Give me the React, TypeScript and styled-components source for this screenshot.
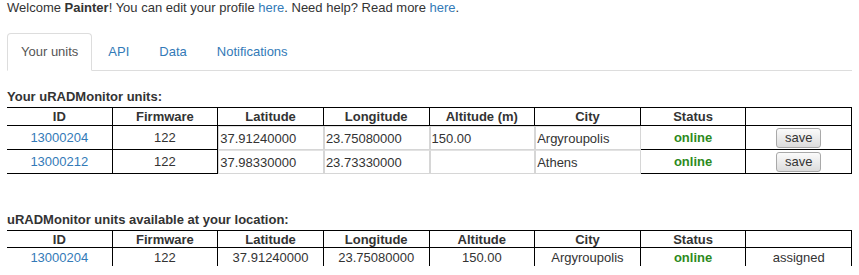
import React from 'react'
import styled, { createGlobalStyle } from 'styled-components'

interface Unit {
  id: string
  firmware: string
  lat: string
  lng: string
  alt: string
  city: string
  status: string
}

const myUnits: Unit[] = [
  { id: '13000204', firmware: '122', lat: '37.91240000', lng: '23.75080000', alt: '150.00', city: 'Argyroupolis', status: 'online' },
  { id: '13000212', firmware: '122', lat: '37.98330000', lng: '23.73330000', alt: '', city: 'Athens', status: 'online' },
]

const nearbyUnits: Unit[] = [
  { id: '13000204', firmware: '122', lat: '37.91240000', lng: '23.75080000', alt: '150.00', city: 'Argyroupolis', status: 'online' },
]

const tabs = ['Your units', 'API', 'Data', 'Notifications']

const App: React.FC = () => {
  return (
    <Page>
      <GlobalStyle />
      <Welcome>
        Welcome <b>Painter</b>! You can edit your profile <Link href="#">here</Link>. Need help? Read
        more <Link href="#">here</Link>.
      </Welcome>

      <Tabs>
        {tabs.map((t, i) => (
          <Tab key={t} $active={i === 0}>
            {t}
          </Tab>
        ))}
      </Tabs>

      <SectionTitle $gap={18}>Your uRADMonitor units:</SectionTitle>
      <Table>
        <colgroup>
          {Array.from({ length: 8 }).map((_, i) => (
            <col key={i} />
          ))}
        </colgroup>
        <thead>
          <tr>
            <HeadCell>ID</HeadCell>
            <HeadCell>Firmware</HeadCell>
            <HeadCell>Latitude</HeadCell>
            <HeadCell>Longitude</HeadCell>
            <HeadCell>Altitude (m)</HeadCell>
            <HeadCell>City</HeadCell>
            <HeadCell>Status</HeadCell>
            <HeadCell />
          </tr>
        </thead>
        <tbody>
          {myUnits.map((u) => (
            <tr key={u.id}>
              <Cell>
                <Link href="#">{u.id}</Link>
              </Cell>
              <Cell>{u.firmware}</Cell>
              <InputCell>
                <Field defaultValue={u.lat} />
              </InputCell>
              <InputCell>
                <Field defaultValue={u.lng} />
              </InputCell>
              <InputCell>
                <Field defaultValue={u.alt} />
              </InputCell>
              <InputCell>
                <Field defaultValue={u.city} />
              </InputCell>
              <Cell>
                <Status>{u.status}</Status>
              </Cell>
              <Cell>
                <SaveButton type="button">save</SaveButton>
              </Cell>
            </tr>
          ))}
        </tbody>
      </Table>

      <SectionTitle $gap={38}>uRADMonitor units available at your location:</SectionTitle>
      <Table>
        <colgroup>
          {Array.from({ length: 8 }).map((_, i) => (
            <col key={i} />
          ))}
        </colgroup>
        <thead>
          <tr>
            <HeadCell $dense>ID</HeadCell>
            <HeadCell $dense>Firmware</HeadCell>
            <HeadCell $dense>Latitude</HeadCell>
            <HeadCell $dense>Longitude</HeadCell>
            <HeadCell $dense>Altitude</HeadCell>
            <HeadCell $dense>City</HeadCell>
            <HeadCell $dense>Status</HeadCell>
            <HeadCell $dense />
          </tr>
        </thead>
        <tbody>
          {nearbyUnits.map((u) => (
            <tr key={u.id}>
              <Cell $dense>
                <Link href="#">{u.id}</Link>
              </Cell>
              <Cell $dense>{u.firmware}</Cell>
              <Cell $dense>{u.lat}</Cell>
              <Cell $dense>{u.lng}</Cell>
              <Cell $dense>{u.alt}</Cell>
              <Cell $dense>{u.city}</Cell>
              <Cell $dense>
                <Status>{u.status}</Status>
              </Cell>
              <Cell $dense>assigned</Cell>
            </tr>
          ))}
        </tbody>
      </Table>
    </Page>
  )
}

const GlobalStyle = createGlobalStyle`
  body {
    margin: 0;
    background: #fff;
    color: #333;
    font-family: "Liberation Sans", Arial, Helvetica, sans-serif;
  }
`

const Page = styled.div`
  padding: 0 7px;
`

const Welcome = styled.p`
  margin: 0;
  font-size: 13px;
  line-height: 16px;
  color: #333;
`

const Link = styled.a`
  color: #337ab7;
  text-decoration: none;
`

const Tabs = styled.ul`
  display: flex;
  list-style: none;
  margin: 17px 0 0;
  padding: 0;
  border-bottom: 1px solid #ddd;
`

const Tab = styled.li<{ $active?: boolean }>`
  margin: 0 2px -1px 0;
  padding: 10px 13px;
  font-size: 13px;
  line-height: 16px;
  border: 1px solid ${(p) => (p.$active ? '#ddd' : 'transparent')};
  border-bottom-color: ${(p) => (p.$active ? '#fff' : 'transparent')};
  border-radius: 4px 4px 0 0;
  background: ${(p) => (p.$active ? '#fff' : 'transparent')};
  color: ${(p) => (p.$active ? '#555' : '#337ab7')};
`

const SectionTitle = styled.h4<{ $gap: number }>`
  margin: ${(p) => p.$gap}px 0 2px;
  font-size: 13px;
  line-height: 16px;
  font-weight: bold;
  color: #333;
`

const Table = styled.table`
  width: 100%;
  table-layout: fixed;
  border-collapse: separate;
  border-spacing: 0;
  font-size: 13px;
  color: #333;
`

const HeadCell = styled.th<{ $dense?: boolean }>`
  height: ${(p) => (p.$dense ? 16 : 17)}px;
  padding: 0;
  border-top: 1px solid #000;
  border-right: 1px solid #000;
  border-bottom: 1px solid #000;
  font-weight: bold;
  text-align: center;
  vertical-align: middle;
  line-height: 15px;
`

const Cell = styled.td<{ $dense?: boolean }>`
  height: ${(p) => (p.$dense ? 18 : 23)}px;
  padding: 0;
  border-right: 1px solid #000;
  border-bottom: ${(p) => (p.$dense ? 'none' : '1px solid #000')};
  text-align: center;
  vertical-align: middle;
  line-height: 15px;
`

const InputCell = styled.td`
  padding: 0;
  vertical-align: top;
`

const Field = styled.input`
  display: block;
  width: 100%;
  height: 24px;
  box-sizing: border-box;
  margin: 0;
  padding: 0 1px;
  border: 1px solid #d6d6d6;
  border-top-color: #e2e2e2;
  font-family: "Liberation Sans", Arial, sans-serif;
  font-size: 13px;
  color: #333;
  background: #fff;
  outline: none;
`

const Status = styled.span`
  color: #2d8a1c;
  font-weight: bold;
`

const SaveButton = styled.button`
  height: 20px;
  padding: 0 8px;
  border: 1px solid #a9a9a9;
  border-radius: 3px;
  background: linear-gradient(#fbfbfb, #dcdcdc);
  font-family: "Liberation Sans", Arial, sans-serif;
  font-size: 13px;
  color: #333;
  line-height: 16px;
`

export default App
